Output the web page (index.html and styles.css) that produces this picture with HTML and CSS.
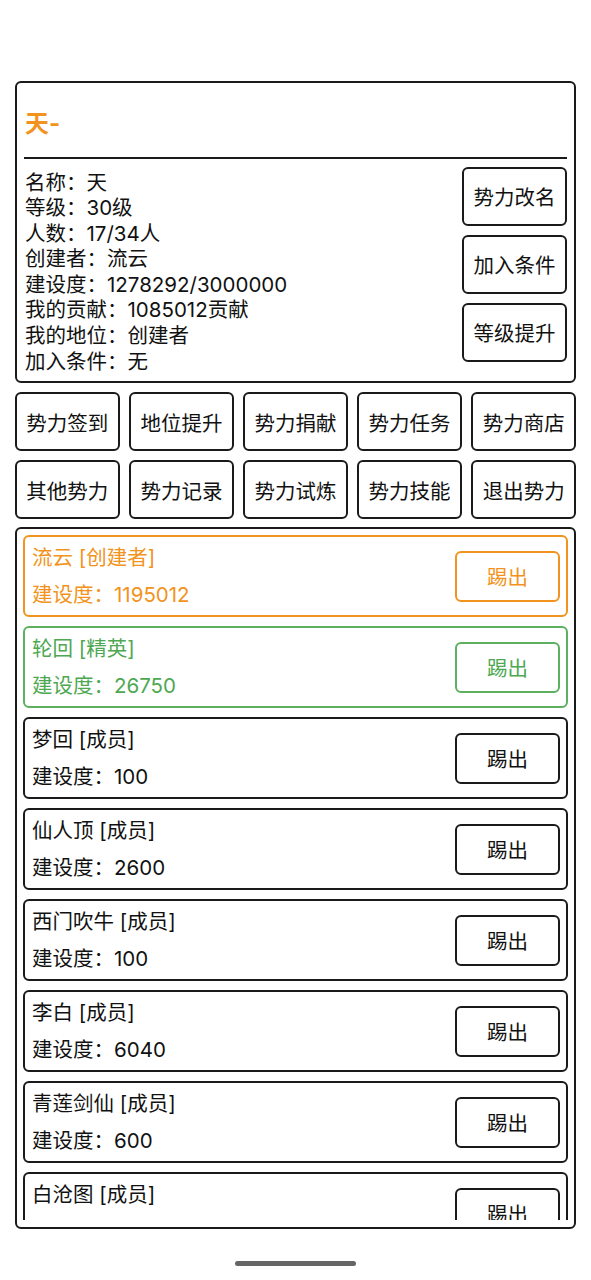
FILE: index.html
```html
<!DOCTYPE html>
<html lang="zh">
<head>
<meta charset="utf-8">
<title>势力</title>
<link rel="stylesheet" href="styles.css">
</head>
<body>
<div class="page">
  <section class="info-card">
    <h1 class="title">天-</h1>
    <div class="divider"></div>
    <div class="info-row">
      <div class="info-text">
        <div>名称：天</div>
        <div>等级：30级</div>
        <div>人数：17/34人</div>
        <div>创建者：流云</div>
        <div>建设度：1278292/3000000</div>
        <div>我的贡献：1085012贡献</div>
        <div>我的地位：创建者</div>
        <div>加入条件：无</div>
      </div>
      <div class="side-btns">
        <button class="btn side-btn">势力改名</button>
        <button class="btn side-btn">加入条件</button>
        <button class="btn side-btn">等级提升</button>
      </div>
    </div>
  </section>

  <div class="grid">
    <button class="btn grid-btn">势力签到</button>
    <button class="btn grid-btn">地位提升</button>
    <button class="btn grid-btn">势力捐献</button>
    <button class="btn grid-btn">势力任务</button>
    <button class="btn grid-btn">势力商店</button>
    <button class="btn grid-btn">其他势力</button>
    <button class="btn grid-btn">势力记录</button>
    <button class="btn grid-btn">势力试炼</button>
    <button class="btn grid-btn">势力技能</button>
    <button class="btn grid-btn">退出势力</button>
  </div>

  <section class="members">
    <div class="member-list">
      <div class="member creator">
        <div class="member-text">
          <div>流云 [创建者]</div>
          <div>建设度：1195012</div>
        </div>
        <button class="kick">踢出</button>
      </div>
      <div class="member elite">
        <div class="member-text">
          <div>轮回 [精英]</div>
          <div>建设度：26750</div>
        </div>
        <button class="kick">踢出</button>
      </div>
      <div class="member">
        <div class="member-text">
          <div>梦回 [成员]</div>
          <div>建设度：100</div>
        </div>
        <button class="kick">踢出</button>
      </div>
      <div class="member">
        <div class="member-text">
          <div>仙人顶 [成员]</div>
          <div>建设度：2600</div>
        </div>
        <button class="kick">踢出</button>
      </div>
      <div class="member">
        <div class="member-text">
          <div>西门吹牛 [成员]</div>
          <div>建设度：100</div>
        </div>
        <button class="kick">踢出</button>
      </div>
      <div class="member">
        <div class="member-text">
          <div>李白 [成员]</div>
          <div>建设度：6040</div>
        </div>
        <button class="kick">踢出</button>
      </div>
      <div class="member">
        <div class="member-text">
          <div>青莲剑仙 [成员]</div>
          <div>建设度：600</div>
        </div>
        <button class="kick">踢出</button>
      </div>
      <div class="member">
        <div class="member-text">
          <div>白沧图 [成员]</div>
          <div>建设度：3200</div>
        </div>
        <button class="kick">踢出</button>
      </div>
    </div>
  </section>
</div>
<div class="home-bar"></div>
</body>
</html>
```

FILE: styles.css
```css
* {
  box-sizing: border-box;
}

html, body {
  margin: 0;
  padding: 0;
  background: #ffffff;
}

body {
  font-family: Inter, "Noto Sans CJK SC", sans-serif;
  font-size: 20.5px;
  color: #111111;
  width: 591px;
  height: 1280px;
  overflow: hidden;
}

.page {
  padding: 81px 15px 0 15px;
}

.info-card {
  border: 2px solid #1a1a1a;
  border-radius: 6px;
  padding: 24px 7px 7px 7px;
}

.title {
  margin: 0;
  font-size: 24px;
  line-height: 34px;
  height: 34px;
  font-weight: 700;
  color: #f29320;
  padding-left: 1px;
}

.divider {
  margin-top: 16px;
  height: 1.5px;
  background: #1a1a1a;
}

.info-row {
  display: flex;
  justify-content: space-between;
  align-items: flex-start;
  padding-top: 8px;
}

.info-text {
  padding-top: 3px;
}

.info-text div {
  height: 25.6px;
  line-height: 25.6px;
  white-space: nowrap;
  padding-left: 1px;
}

.side-btns {
  display: flex;
  flex-direction: column;
  gap: 9px;
}

.btn {
  font-family: inherit;
  font-size: 20.5px;
  color: #111111;
  background: #ffffff;
  border: 2px solid #1a1a1a;
  border-radius: 6px;
  padding: 0;
  margin: 0;
}

.side-btn {
  width: 105px;
  height: 59px;
}

.grid {
  margin-top: 9px;
  display: grid;
  grid-template-columns: repeat(5, 1fr);
  column-gap: 9.5px;
  row-gap: 9px;
}

.grid-btn {
  height: 59px;
}

.members {
  margin-top: 8px;
  border: 2px solid #1a1a1a;
  border-radius: 6px;
  padding: 6px 6px 7px 6px;
}

.member-list {
  height: 685px;
  overflow: hidden;
  display: flex;
  flex-direction: column;
  gap: 9px;
}

.member {
  flex: none;
  height: 82px;
  border: 2px solid #1a1a1a;
  border-radius: 6px;
  padding: 0 6px 0 7px;
  display: flex;
  align-items: center;
  justify-content: space-between;
  color: #111111;
}

.member-text {
  margin-top: -1px;
}

.member-text div {
  height: 37px;
  line-height: 37px;
  white-space: nowrap;
}

.kick {
  font-family: inherit;
  font-size: 20.5px;
  width: 105px;
  height: 51px;
  background: #ffffff;
  border: 2px solid #1a1a1a;
  border-radius: 6px;
  color: #111111;
  padding: 0;
}

.member.creator {
  border-color: #f29320;
  color: #f29320;
}

.member.creator .kick {
  border-color: #f29320;
  color: #f29320;
}

.member.elite {
  border-color: #5cb05f;
  color: #4ea852;
}

.member.elite .kick {
  border-color: #5cb05f;
  color: #4ea852;
}

.home-bar {
  width: 121px;
  height: 4.5px;
  border-radius: 3px;
  background: #666666;
  margin: 32px auto 0 auto;
}
```
